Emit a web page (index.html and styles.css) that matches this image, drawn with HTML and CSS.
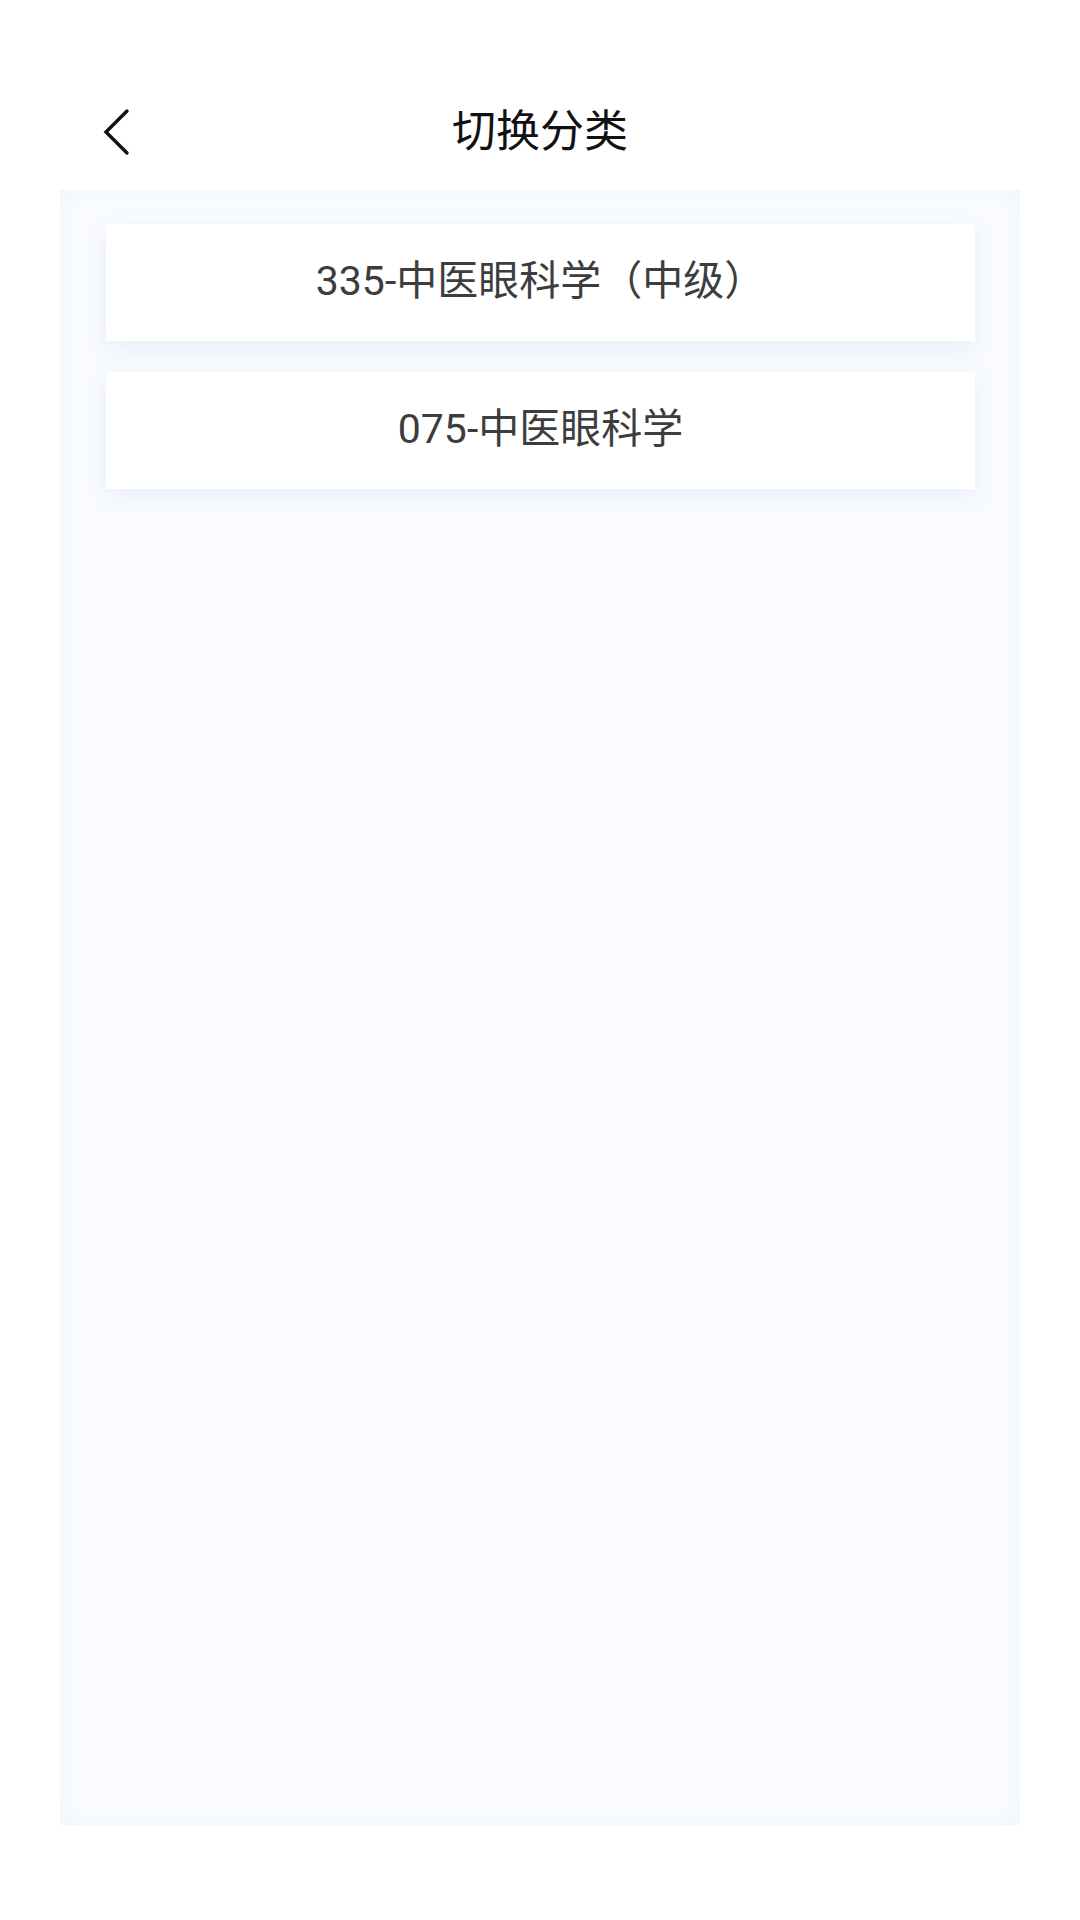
FILE: index.html
```html
<!DOCTYPE html>
<html lang="zh-CN">
<head>
<meta charset="utf-8">
<title>切换分类</title>
<link rel="stylesheet" href="styles.css">
</head>
<body>
<div class="page">
  <header class="header">
    <div class="back">
      <svg width="28" height="48" viewBox="0 0 28 48" aria-hidden="true">
        <path d="M25 3 L4 24 L25 45" fill="none" stroke="#111" stroke-width="3.4" stroke-linecap="round" stroke-linejoin="miter"/>
      </svg>
    </div>
    <h1 class="title">切换分类</h1>
    <div class="spacer"></div>
  </header>
  <main class="panel">
    <div class="card">335-中医眼科学（中级）</div>
    <div class="card">075-中医眼科学</div>
  </main>
</div>
</body>
</html>
```

FILE: styles.css
```css
html, body {
  margin: 0;
  padding: 0;
  background: #ffffff;
}
body {
  font-family: Roboto, "Noto Sans CJK SC", "Noto Sans", sans-serif;
  width: 1080px;
  height: 1920px;
  overflow: hidden;
}
.page {
  display: flex;
  flex-direction: column;
}
.header {
  display: grid;
  grid-template-columns: 1fr auto 1fr;
  align-items: center;
  padding-top: 88px;
  height: 88px;
}
.back {
  padding-left: 102px;
  display: flex;
  align-items: center;
}
.back svg {
  display: block;
}
.title {
  margin: 0;
  font-weight: 400;
  font-size: 44px;
  line-height: 88px;
  color: #111;
  letter-spacing: 0;
}
.panel {
  margin: 14px 60px 0;
  height: 1635px;
  box-sizing: border-box;
  padding: 34px 45px 0 46px;
  background: #f9fbfe;
  box-shadow: inset 0 0 18px rgba(226, 234, 246, 0.4);
  display: flex;
  flex-direction: column;
  gap: 31px;
}
.card {
  height: 117px;
  box-sizing: border-box;
  padding-bottom: 12px;
  background: #ffffff;
  display: flex;
  align-items: center;
  justify-content: center;
  font-size: 41px;
  color: #3d3d3d;
  box-shadow: 0 6px 22px rgba(210, 224, 242, 0.45);
}
```
